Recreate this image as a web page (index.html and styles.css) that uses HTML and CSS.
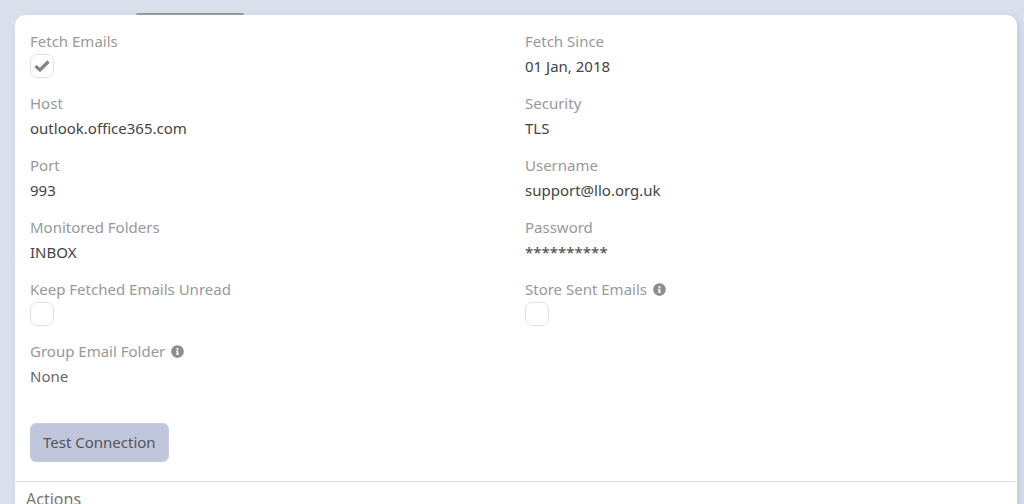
FILE: index.html
```html
<!DOCTYPE html>
<html lang="en">
<head>
  <meta charset="utf-8">
  <title>Email Settings</title>
  <link rel="stylesheet" href="styles.css">
</head>
<body>
  <div class="tabs">
    <div class="tab-active"></div>
  </div>
  <main class="card">
    <div class="details">
      <div class="field">
        <label class="label" for="fetchEmails">Fetch Emails</label>
        <input class="check" type="checkbox" id="fetchEmails" checked>
      </div>
      <div class="field">
        <div class="label">Fetch Since</div>
        <div class="value">01 Jan, 2018</div>
      </div>
      <div class="field">
        <div class="label">Host</div>
        <div class="value">outlook.office365.com</div>
      </div>
      <div class="field">
        <div class="label">Security</div>
        <div class="value">TLS</div>
      </div>
      <div class="field">
        <div class="label">Port</div>
        <div class="value">993</div>
      </div>
      <div class="field">
        <div class="label">Username</div>
        <div class="value">support@llo.org.uk</div>
      </div>
      <div class="field">
        <div class="label">Monitored Folders</div>
        <div class="value">INBOX</div>
      </div>
      <div class="field">
        <div class="label">Password</div>
        <div class="value">**********</div>
      </div>
      <div class="field">
        <label class="label" for="keepUnread">Keep Fetched Emails Unread</label>
        <input class="check" type="checkbox" id="keepUnread">
      </div>
      <div class="field">
        <label class="label" for="storeSent">Store Sent Emails
          <svg class="info" viewBox="0 0 512 512"><path d="M256 8C119 8 8 119 8 256s111 248 248 248 248-111 248-248S393 8 256 8zm0 110a42 42 0 1 1 0 84 42 42 0 0 1 0-84zm56 254c0 7-5 12-12 12h-88c-7 0-12-5-12-12v-24c0-7 5-12 12-12h12v-64h-12c-7 0-12-5-12-12v-24c0-7 5-12 12-12h64c7 0 12 5 12 12v100h12c7 0 12 5 12 12v24z"/></svg>
        </label>
        <input class="check" type="checkbox" id="storeSent">
      </div>
      <div class="field">
        <div class="label">Group Email Folder
          <svg class="info" viewBox="0 0 512 512"><path d="M256 8C119 8 8 119 8 256s111 248 248 248 248-111 248-248S393 8 256 8zm0 110a42 42 0 1 1 0 84 42 42 0 0 1 0-84zm56 254c0 7-5 12-12 12h-88c-7 0-12-5-12-12v-24c0-7 5-12 12-12h12v-64h-12c-7 0-12-5-12-12v-24c0-7 5-12 12-12h64c7 0 12 5 12 12v100h12c7 0 12 5 12 12v24z"/></svg>
        </div>
        <div class="value muted">None</div>
      </div>
    </div>
    <div class="buttons">
      <button class="test-button" type="button">Test Connection</button>
    </div>
    <div class="actions">Actions</div>
  </main>
</body>
</html>
```

FILE: styles.css
```css
* {
  box-sizing: border-box;
}
body {
  margin: 0;
  padding: 0 7px 0 15px;
  background-color: #d9e0ec;
  font-family: "Noto Sans", "Open Sans", sans-serif;
  font-size: 15px;
  color: #444;
  height: 100vh;
  overflow: hidden;
}
.tabs {
  display: flex;
  align-items: flex-end;
  height: 15px;
  padding-left: 121px;
}
.tab-active {
  width: 108px;
  height: 2px;
  border-radius: 2px 2px 0 0;
  background-color: #999;
}
.card {
  min-height: 100vh;
  background-color: #fff;
  border-radius: 10px;
  box-shadow: 3px 2px 6px rgba(100, 115, 160, 0.2);
}
.details {
  display: grid;
  grid-template-columns: 1fr 1fr;
  column-gap: 18px;
  padding: 13px 15px 0;
}
.field {
  display: flex;
  flex-direction: column;
  align-items: flex-start;
  padding-bottom: 12px;
}
.label {
  display: flex;
  align-items: center;
  gap: 6px;
  line-height: 26px;
  color: #999;
}
.value {
  line-height: 24px;
}
.muted {
  color: #666;
}
.info {
  width: 13px;
  height: 13px;
  fill: #8f8f8f;
}
.check {
  appearance: none;
  width: 24px;
  height: 24px;
  margin: 0;
  border: 1px solid #dfe1f6;
  border-radius: 7px;
  background-color: #fff;
}
.check:checked {
  background: #fff url("data:image/svg+xml,%3Csvg xmlns='http://www.w3.org/2000/svg' viewBox='0 0 16 12'%3E%3Cpath d='M1.5 6L6 10 14.5 1.5' fill='none' stroke='%23858585' stroke-width='3.2'/%3E%3C/svg%3E") center / 16px 12px no-repeat;
}
.buttons {
  padding: 23px 15px 19px;
}
.test-button {
  display: block;
  padding: 7px 12px;
  border: 1px solid #c9cde3;
  border-radius: 6px;
  background-color: #c0c6dc;
  font: inherit;
  line-height: 23px;
  color: #555;
  cursor: pointer;
}
.actions {
  padding: 4px 11px;
  border-top: 1px solid #e0e3ef;
  font-size: 16px;
  line-height: 26px;
  color: #777;
}
```
